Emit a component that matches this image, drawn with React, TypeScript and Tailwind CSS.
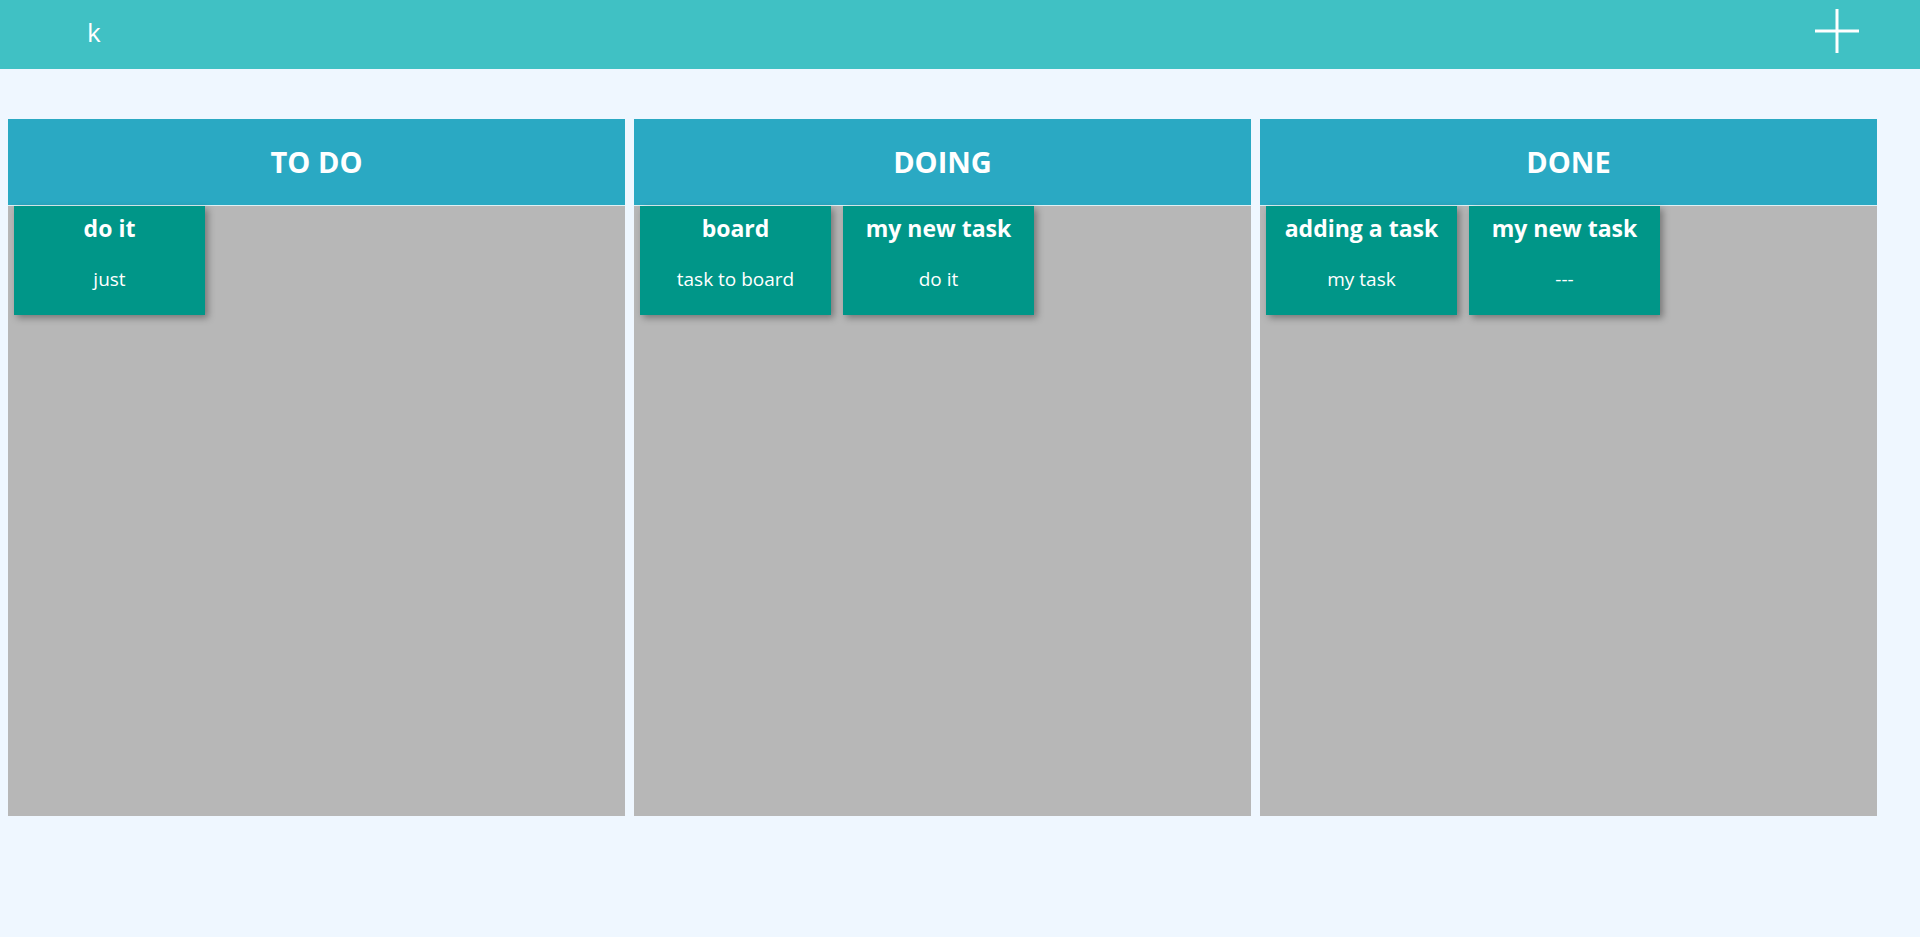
type Task = { title: string; body: string }

const COLUMNS: { name: string; tasks: Task[] }[] = [
  { name: 'TO DO', tasks: [{ title: 'do it', body: 'just' }] },
  {
    name: 'DOING',
    tasks: [
      { title: 'board', body: 'task to board' },
      { title: 'my new task', body: 'do it' },
    ],
  },
  {
    name: 'DONE',
    tasks: [
      { title: 'adding a task', body: 'my task' },
      { title: 'my new task', body: '---' },
    ],
  },
]

function TaskCard({ task }: { task: Task }) {
  return (
    <div className="w-[191px] h-[109px] bg-[#009688] text-white text-center shadow-[3px_3px_7px_rgba(0,0,0,0.35)] pt-[7px]">
      <h3 className="text-[23px] leading-[30px] font-bold whitespace-nowrap">{task.title}</h3>
      <p className="mt-[23px] text-[19px] leading-[26px]">{task.body}</p>
    </div>
  )
}

export default function App() {
  return (
    <div className="w-full min-h-screen bg-[#eff7ff] font-['Open_Sans','Noto_Sans',sans-serif]">
      <header className="h-[69px] bg-[#40c1c4] flex items-center justify-between">
        <span className="pl-[87px] text-white text-[26px] leading-none -mt-[6px]">k</span>
        <button className="mr-[61px] -mt-[7px] text-white">
          <svg width="44" height="44" viewBox="0 0 44 44">
            <line x1="22" y1="0" x2="22" y2="44" stroke="#fff" strokeWidth="3" />
            <line x1="0" y1="22" x2="44" y2="22" stroke="#fff" strokeWidth="3" />
          </svg>
        </button>
      </header>

      <main className="flex gap-[9px] pl-[8px] pt-[50px]">
        {COLUMNS.map((col) => (
          <section key={col.name} className="w-[617px]">
            <div className="h-[87px] bg-[#2aa9c3] border-b border-[#dff1f4] flex items-center justify-center">
              <h2 className="text-white text-[29px] font-bold">{col.name}</h2>
            </div>
            <div className="h-[610px] bg-[#b7b7b7] flex flex-wrap content-start gap-[12px] pl-[6px]">
              {col.tasks.map((t, i) => (
                <TaskCard key={i} task={t} />
              ))}
            </div>
          </section>
        ))}
      </main>
    </div>
  )
}
